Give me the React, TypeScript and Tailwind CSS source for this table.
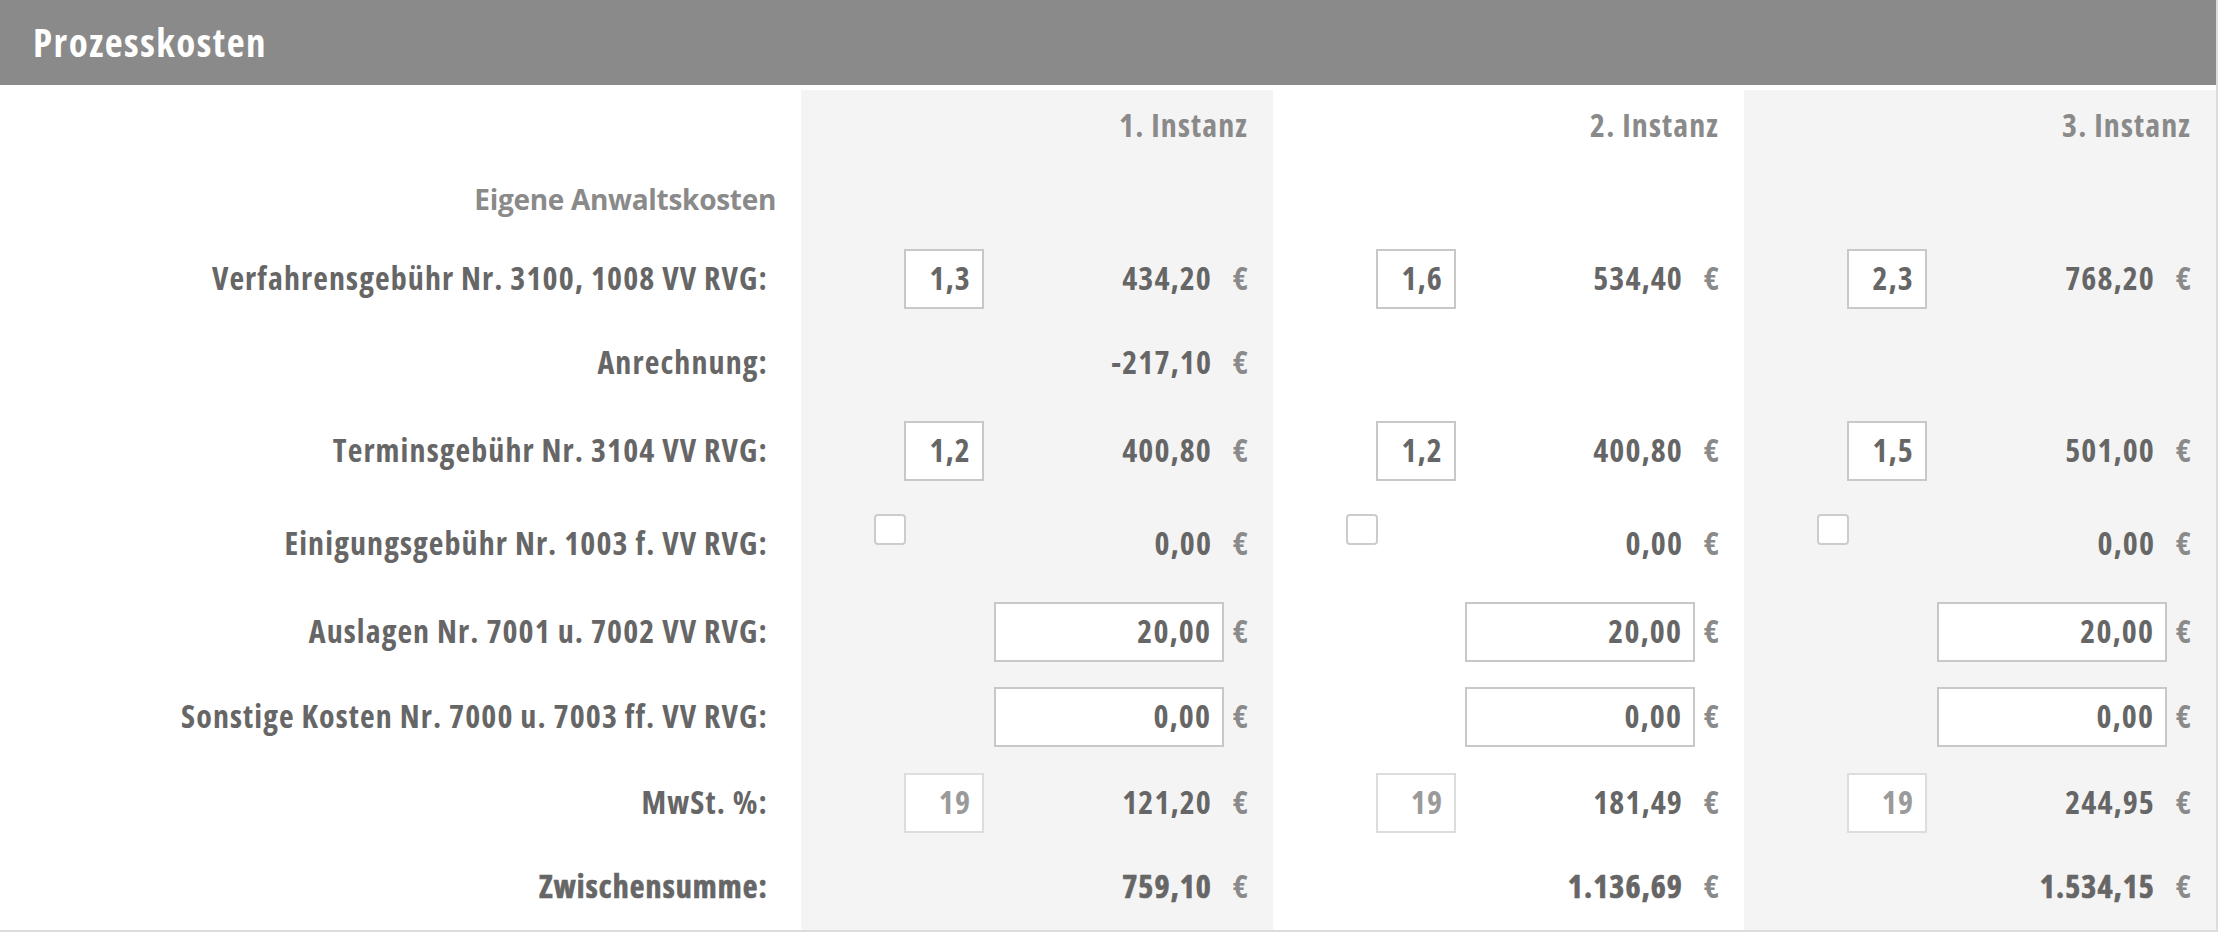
type Kind = "head" | "section" | "factor" | "plain" | "check" | "input" | "mwst" | "sum";

interface Row {
  label: string;
  kind: Kind;
  h: string;
}

const rows: Row[] = [
  { label: "", kind: "head", h: "h-[72px]" },
  { label: "Eigene Anwaltskosten", kind: "section", h: "h-[76px]" },
  { label: "Verfahrensgebühr Nr. 3100, 1008 VV RVG:", kind: "factor", h: "h-[82px]" },
  { label: "Anrechnung:", kind: "plain", h: "h-[86px]" },
  { label: "Terminsgebühr Nr. 3104 VV RVG:", kind: "factor", h: "h-[90px]" },
  { label: "Einigungsgebühr Nr. 1003 f. VV RVG:", kind: "check", h: "h-[96px]" },
  { label: "Auslagen Nr. 7001 u. 7002 VV RVG:", kind: "input", h: "h-[80px]" },
  { label: "Sonstige Kosten Nr. 7000 u. 7003 ff. VV RVG:", kind: "input", h: "h-[90px]" },
  { label: "MwSt. %:", kind: "mwst", h: "h-[81px]" },
  { label: "Zwischensumme:", kind: "sum", h: "h-[87px]" },
];

interface Instanz {
  title: string;
  shaded: boolean;
  // one entry per row: [factor, amount]
  cells: (string[] | null)[];
}

const instanzen: Instanz[] = [
  {
    title: "1. Instanz",
    shaded: true,
    cells: [
      null,
      null,
      ["1,3", "434,20"],
      ["", "-217,10"],
      ["1,2", "400,80"],
      ["", "0,00"],
      ["", "20,00"],
      ["", "0,00"],
      ["19", "121,20"],
      ["", "759,10"],
    ],
  },
  {
    title: "2. Instanz",
    shaded: false,
    cells: [
      null,
      null,
      ["1,6", "534,40"],
      null,
      ["1,2", "400,80"],
      ["", "0,00"],
      ["", "20,00"],
      ["", "0,00"],
      ["19", "181,49"],
      ["", "1.136,69"],
    ],
  },
  {
    title: "3. Instanz",
    shaded: true,
    cells: [
      null,
      null,
      ["2,3", "768,20"],
      null,
      ["1,5", "501,00"],
      ["", "0,00"],
      ["", "20,00"],
      ["", "0,00"],
      ["19", "244,95"],
      ["", "1.534,15"],
    ],
  },
];

const txt = "text-[32px] leading-none font-bold tracking-[1.1px]";
const heavy = "[-webkit-text-stroke:0.7px_#666666]";

function Euro() {
  return <span className={`${txt} text-[#8a8a8a] w-[16px] text-right`}>€</span>;
}

function Cell({ kind, data }: { kind: Kind; data: string[] | null }) {
  if (!data) return null;
  const [factor, amount] = data;

  if (kind === "input") {
    return (
      <div className="flex items-center justify-end gap-[9px] h-full pr-[24px]">
        <div className="w-[230px] h-[60px] border-2 border-[#c8c8c8] bg-white flex items-center justify-end pr-[11px] pb-[2px]">
          <span className={`${txt} text-[#666666]`}>{amount}</span>
        </div>
        <span className="pb-[2px] flex">
          <Euro />
        </span>
      </div>
    );
  }

  return (
    <div
      className={`flex h-full pr-[24px] ${kind === "check" ? "items-start pl-[73px] pt-[18px]" : "items-center pl-[103px]"}`}
    >
      {kind === "factor" && (
        <div className="w-[80px] h-[60px] border-2 border-[#c8c8c8] bg-white flex items-center justify-end pr-[11px] pb-[2px]">
          <span className={`${txt} text-[#666666]`}>{factor}</span>
        </div>
      )}
      {kind === "mwst" && (
        <div className="w-[80px] h-[60px] border-2 border-[#dddddd] bg-white flex items-center justify-end pr-[11px] pb-[2px]">
          <span className={`${txt} text-[#9a9a9a]`}>{factor}</span>
        </div>
      )}
      {kind === "check" && (
        <div className="w-[32px] h-[31px] rounded-[4px] border-2 border-[#cccccc] bg-white" />
      )}
      <div
        className={`flex-1 flex items-center justify-end gap-[21px] pb-[2px] ${
          kind === "check" ? "self-stretch -mt-[18px]" : ""
        }`}
      >
        <span className={`${txt} text-[#666666] ${kind === "sum" ? heavy : ""}`}>{amount}</span>
        <Euro />
      </div>
    </div>
  );
}

export default function App() {
  return (
    <div className="w-[2218px] h-[932px] bg-white border-r-2 border-b-2 border-[#dcdcdc] font-['Open_Sans',sans-serif] [font-stretch:75%]">
      <div className="h-[85px] bg-[#8a8a8a] flex items-center pl-[33px] pb-[2px]">
        <h1 className="text-[39px] leading-none font-bold text-white tracking-[1.5px]">Prozesskosten</h1>
      </div>
      <div className="mt-[5px] grid grid-cols-[801px_472px_471px_472px]">
        <div className="flex flex-col">
          {rows.map((r, i) => (
            <div
              key={i}
              className={`${r.h} flex items-center justify-end pb-[2px] ${
                r.kind === "section" ? "pr-[25px]" : "pr-[33px]"
              }`}
            >
              {r.kind === "section" ? (
                <span className="text-[28px] leading-none font-bold tracking-[-0.3px] text-[#8a8a8a] [font-stretch:100%]">
                  {r.label}
                </span>
              ) : (
                r.label && (
                  <span className={`${txt} text-[#666666] ${r.kind === "sum" ? heavy : ""}`}>{r.label}</span>
                )
              )}
            </div>
          ))}
        </div>
        {instanzen.map((ins) => (
          <div key={ins.title} className={`flex flex-col ${ins.shaded ? "bg-[#f4f4f4]" : "bg-white"}`}>
            {rows.map((r, i) => (
              <div key={i} className={r.h}>
                {r.kind === "head" ? (
                  <div className="flex items-center justify-end h-full pr-[25px] pb-[2px]">
                    <span className={`${txt} text-[#8a8a8a]`}>{ins.title}</span>
                  </div>
                ) : (
                  <Cell kind={r.kind} data={ins.cells[i]} />
                )}
              </div>
            ))}
          </div>
        ))}
      </div>
    </div>
  );
}
